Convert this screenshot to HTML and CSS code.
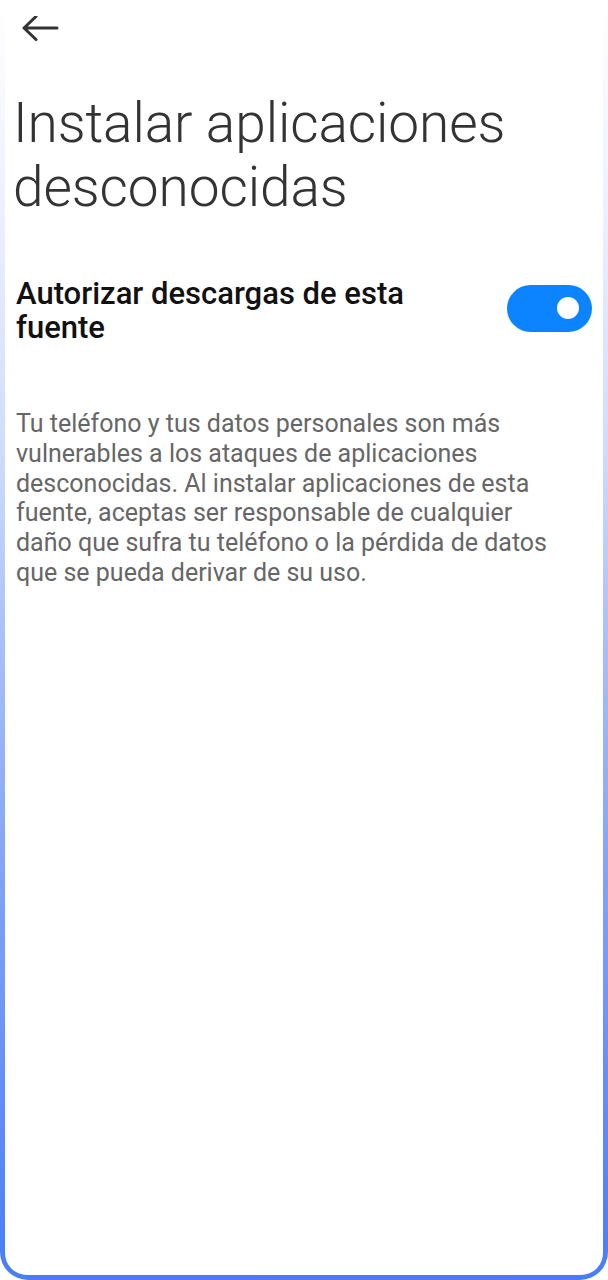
FILE: index.html
```html
<!DOCTYPE html>
<html lang="es">
<head>
<meta charset="utf-8">
<title>Instalar aplicaciones desconocidas</title>
<link rel="stylesheet" href="styles.css">
</head>
<body>
<div class="frame">
  <div class="screen">
    <header class="topbar">
      <svg class="back" width="40" height="30" viewBox="0 0 40 30" aria-label="Atrás">
        <path d="M37 12H4M16 0.5L4 12L16 23.5" fill="none" stroke="#333" stroke-width="3" stroke-linecap="round" stroke-linejoin="round"/>
      </svg>
    </header>
    <h1 class="title">Instalar aplicaciones desconocidas</h1>
    <div class="setting">
      <div class="setting-label">Autorizar descargas de esta fuente</div>
      <div class="toggle on"><span class="knob"></span></div>
    </div>
    <p class="desc">Tu teléfono y tus datos personales son más vulnerables a los ataques de aplicaciones desconocidas. Al instalar aplicaciones de esta fuente, aceptas ser responsable de cualquier<br>daño que sufra tu teléfono o la pérdida de datos<br>que se pueda derivar de su uso.</p>
  </div>
</div>
</body>
</html>
```

FILE: styles.css
```css
html, body {
  margin: 0;
  padding: 0;
  background: #ffffff;
}
body {
  font-family: Roboto, "Noto Sans", "Liberation Sans", sans-serif;
}
.frame {
  width: 608px;
  height: 1280px;
  box-sizing: border-box;
  padding: 0 5px 5px 5px;
  background: linear-gradient(to bottom, #ffffff 0%, #eef2fe 15%, #cfdcfc 35%, #a9bff9 50%, #7fa0f8 70%, #4a7cf7 100%);
  border-radius: 0 0 28px 28px;
  overflow: hidden;
}
.screen {
  height: 100%;
  background: #ffffff;
  border-radius: 0 0 22px 22px;
  box-sizing: border-box;
  padding: 0 11px 0 11px;
}
.topbar {
  height: 54px;
  display: flex;
  align-items: flex-start;
  padding-top: 16px;
  box-sizing: border-box;
}
.back {
  display: block;
  margin-left: 4px;
}
.title {
  margin: 37px 0 0 -3px;
  font-size: 55px;
  font-weight: 300;
  line-height: 64px;
  color: #333333;
  letter-spacing: -0.1px;
  max-width: 520px;
}
.setting {
  display: flex;
  align-items: center;
  justify-content: space-between;
  margin-top: 58px;
}
.setting-label {
  font-size: 31px;
  font-weight: 500;
  line-height: 34px;
  color: #111111;
  max-width: 440px;
}
.toggle {
  width: 85px;
  height: 47px;
  border-radius: 24px;
  background: #0d84ff;
  position: relative;
  flex: none;
  margin-bottom: 6px;
}
.knob {
  position: absolute;
  width: 22px;
  height: 22px;
  border-radius: 50%;
  background: #ffffff;
  top: 12.5px;
  right: 13px;
}
.desc {
  margin: 64px 0 0 0;
  font-size: 25px;
  line-height: 29.8px;
  color: #666666;
  max-width: 545px;
}
```
